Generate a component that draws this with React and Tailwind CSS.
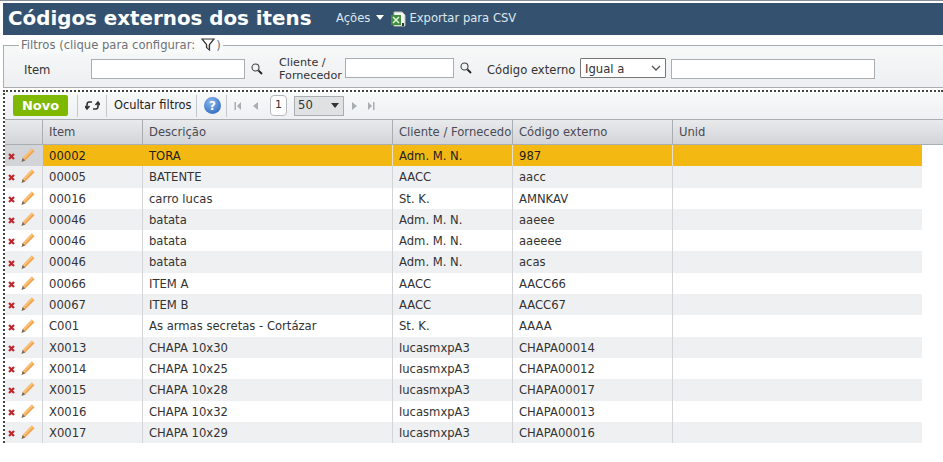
const rows = [
  ['00002', 'TORA', 'Adm. M. N.', '987'],
  ['00005', 'BATENTE', 'AACC', 'aacc'],
  ['00016', 'carro lucas', 'St. K.', 'AMNKAV'],
  ['00046', 'batata', 'Adm. M. N.', 'aaeee'],
  ['00046', 'batata', 'Adm. M. N.', 'aaeeee'],
  ['00046', 'batata', 'Adm. M. N.', 'acas'],
  ['00066', 'ITEM A', 'AACC', 'AACC66'],
  ['00067', 'ITEM B', 'AACC', 'AACC67'],
  ['C001', 'As armas secretas - Cortázar', 'St. K.', 'AAAA'],
  ['X0013', 'CHAPA 10x30', 'lucasmxpA3', 'CHAPA00014'],
  ['X0014', 'CHAPA 10x25', 'lucasmxpA3', 'CHAPA00012'],
  ['X0015', 'CHAPA 10x28', 'lucasmxpA3', 'CHAPA00017'],
  ['X0016', 'CHAPA 10x32', 'lucasmxpA3', 'CHAPA00013'],
  ['X0017', 'CHAPA 10x29', 'lucasmxpA3', 'CHAPA00016'],
];

function Pencil() {
  return (
    <svg width="14" height="15" viewBox="0 0 14 15">
      <path d="M10.8 0.5 L13.5 3.2 L4.3 12.6 L1.6 9.9 Z" fill="#f2a550" />
      <path d="M10.8 0.5 L12.2 1.9 L3 11.3 L1.6 9.9 Z" fill="#f8c07a" />
      <path d="M1.6 9.9 L4.3 12.6 L0.5 14 Z" fill="#7a6a58" />
    </svg>
  );
}

function Cross() {
  return (
    <svg width="7" height="7" viewBox="0 0 7 7" className="mt-[2px]">
      <path d="M1 1 L6 6 M6 1 L1 6" stroke="#c0272d" strokeWidth="2.2" />
    </svg>
  );
}

function Magnifier() {
  return (
    <svg width="12" height="12" viewBox="0 0 12 12" fill="none">
      <circle cx="4.5" cy="4.5" r="3.5" stroke="#444" strokeWidth="1.1" />
      <path d="M7.5 7.5 L11 11" stroke="#222" strokeWidth="1.8" />
    </svg>
  );
}

function Funnel() {
  return (
    <svg width="14" height="13" viewBox="0 0 14 13" fill="none">
      <path d="M1 1 H13 L8.5 6.5 V12 L5.5 9.5 V6.5 Z" stroke="#333" strokeWidth="1.2" fill="#fff" />
      <path d="M6.5 7 V10 L7.8 11 V7 Z" fill="#a9aeb3" />
    </svg>
  );
}

function ExcelIcon() {
  return (
    <svg width="16" height="17" viewBox="0 0 16 17">
      <path d="M4 1 H12 L15 4 V15 H4 Z" fill="#f4f6f2" stroke="#b8c0b4" />
      <rect x="1" y="4" width="10" height="10" fill="#3f8f3f" />
      <path d="M3 6 L9 12 M9 6 L3 12" stroke="#e8f4e0" strokeWidth="1.5" />
      <rect x="12" y="12" width="2" height="3" fill="#333" />
    </svg>
  );
}

function PagerArrow({ dir, end }) {
  return (
    <svg width="8" height="10" viewBox="0 0 8 10" fill="#a9aeb3">
      {dir === 'left' ? <path d={end ? 'M7 1 V9 L3 5 Z' : 'M6 1 V9 L1 5 Z'} /> : <path d={end ? 'M1 1 V9 L5 5 Z' : 'M2 1 V9 L7 5 Z'} />}
      {end && <rect x={dir === 'left' ? 0.5 : 6} y="1" width="1.5" height="8" />}
    </svg>
  );
}

export default function App() {
  return (
    <div className="w-[943px] h-[462px] overflow-hidden bg-white text-[11.6px] text-[#333] font-['DejaVu_Sans',sans-serif]">
      <div className="h-[3px] border-t border-[#8a8f94]" />
      {/* Title */}
      <div className="ml-[3px] h-[32px] bg-[#34526f] flex items-center text-white">
        <h1 className="ml-[5px] w-[328px] text-[19.85px] font-bold leading-none">Códigos externos dos itens</h1>
        <span className="text-[#dfe6ec] text-[11.6px]">Ações</span>
        <span className="ml-[6px] mb-[3px] w-0 h-0 border-x-[4px] border-x-transparent border-t-[5px] border-t-white" />
        <span className="ml-[6px]"><ExcelIcon /></span>
        <span className="ml-[3px] text-[#dfe6ec] text-[11.6px]">Exportar para CSV</span>
      </div>

      {/* Filtros */}
      <div className="ml-[3px] mt-[10px] h-[43px] relative border border-[#a9aeb3] border-r-0 bg-gradient-to-b from-[#f7f8f8] to-[#eeeff1] flex items-center">
        <div className="absolute left-[15px] -top-[8px] px-[2px] bg-gradient-to-b from-white to-[#f7f8f8] flex items-center text-[#6d7278] h-[16px]">
          Filtros (clique para configurar:
          <span className="ml-[6px] mr-[1px] -mt-[4px] text-[#333]"><Funnel /></span>)
        </div>
        <span className="ml-[20px] w-[67px] pt-[8px]">Item</span>
        <div className="w-[154px] h-[20px] mt-[5px] border border-[#a9aeb3] bg-white" />
        <span className="ml-[6px] mt-[4px]"><Magnifier /></span>
        <span className="ml-[16px] w-[66px] leading-[13px] pt-[5px] text-[11.2px]">Cliente /<br />Fornecedor</span>
        <div className="w-[109px] h-[20px] mt-[3px] border border-[#a9aeb3] bg-white" />
        <span className="ml-[6px] mt-[2px]"><Magnifier /></span>
        <span className="ml-[15px] w-[93px] pt-[8px]">Código externo</span>
        <div className="w-[86px] h-[20px] mt-[3px] border border-[#767676] bg-white flex items-center justify-between pl-[4px] pr-[4px] rounded-[1px]">
          <span className="pt-[3px]">Igual a</span>
          <svg width="10" height="6" viewBox="0 0 10 6"><path d="M1 1 L5 5 L9 1" fill="none" stroke="#555" strokeWidth="1.3" /></svg>
        </div>
        <div className="ml-[5px] w-[204px] h-[20px] mt-[5px] border border-[#a9aeb3] bg-white" />
      </div>

      {/* Grid */}
      <div className="ml-[3px] mt-[2px] border-t-2 border-l-2 border-dotted border-[#444]">
        <div className="h-[28px] bg-gradient-to-b from-[#f8f9f9] to-[#eff0f2] border-b border-[#a9aeb3] flex items-center">
          <button className="ml-[8px] w-[55px] h-[21px] rounded-[2px] bg-[#7fb800] text-white font-bold text-[13px] leading-none">Novo</button>
          <span className="ml-[9px] w-px h-[22px] bg-[#c4c8cc]" />
          <svg className="ml-[7px]" width="15" height="13" viewBox="0 0 15 13" fill="none" stroke="#333" strokeWidth="1.6">
            <path d="M7 3 H4 Q2 3 2 6 V9 M0 7 L2 10 L4.5 7" />
            <path d="M8 10 H11 Q13 10 13 7 V4 M10.5 6 L13 3 L15 6" />
          </svg>
          <span className="ml-[6px] w-px h-[22px] bg-[#c4c8cc]" />
          <span className="ml-[7px] w-[77px] text-[#222] text-[11.4px] whitespace-nowrap">Ocultar filtros</span>
          <span className="ml-[5px] w-px h-[22px] bg-[#c4c8cc]" />
          <span className="ml-[7px] w-[17px] h-[17px] rounded-full bg-[radial-gradient(circle_at_40%_30%,#8ab6ee,#1f5cb8)] text-white text-[12px] font-bold flex items-center justify-center">?</span>
          <span className="ml-[5px] w-px h-[22px] bg-[#c4c8cc]" />
          <span className="ml-[7px]"><PagerArrow dir="left" end /></span>
          <span className="ml-[10px]"><PagerArrow dir="left" /></span>
          <span className="ml-[10px] w-[17px] h-[21px] rounded-[4px] border border-[#b5b9bd] bg-white flex items-center justify-center text-[11px]">1</span>
          <div className="ml-[7px] w-[50px] h-[20px] border border-[#a9aeb3] bg-[#dfe1e3] flex items-center justify-between pl-[3px] pr-[4px]">
            <span>50</span>
            <span className="w-0 h-0 border-x-[4px] border-x-transparent border-t-[5px] border-t-[#333]" />
          </div>
          <span className="ml-[6px]"><PagerArrow dir="right" /></span>
          <span className="ml-[9px]"><PagerArrow dir="right" end /></span>
        </div>

        <div className="h-[25px] bg-gradient-to-b from-[#e9eaec] to-[#d2d4d8] border-b border-[#a9aeb3] flex items-center text-[#4a4a55]">
          <div className="w-[38px] h-full border-r border-[#a9aeb3]" />
          <div className="w-[100px] h-full border-r border-[#a9aeb3] pl-[6px] pt-[1px] flex items-center">Item</div>
          <div className="w-[250px] h-full border-r border-[#a9aeb3] pl-[6px] pt-[1px] flex items-center">Descrição</div>
          <div className="w-[120px] h-full border-r border-[#a9aeb3] pl-[6px] pt-[1px] flex items-center overflow-hidden whitespace-nowrap">Cliente / Fornecedor</div>
          <div className="w-[160px] h-full border-r border-[#a9aeb3] pl-[6px] pt-[1px] flex items-center">Código externo</div>
          <div className="pl-[6px] pt-[1px]">Unid</div>
        </div>

        <div className="w-[917px]">
          {rows.map((row, i) => {
            const selected = i === 0;
            const bg = selected ? 'bg-[#f4b813]' : i % 2 === 1 ? 'bg-[#eff0f2]' : 'bg-white';
            return (
              <div key={i} className={`h-[21.3px] flex items-center ${bg} ${selected ? 'text-[#222]' : ''}`}>
                <div className={`w-[38px] h-full flex items-center gap-[6px] pl-[3px] border-r border-[#d2d4d8] ${selected ? 'bg-[#d2d4d8]' : ''}`}>
                  <Cross />
                  <Pencil />
                </div>
                <div className={`w-[100px] h-full flex items-center pl-[6px] pt-[2px] border-r ${selected ? 'border-[#f4b813]' : 'border-[#d2d4d8]'}`}>{row[0]}</div>
                <div className={`w-[250px] h-full flex items-center pl-[6px] pt-[2px] border-r ${selected ? 'border-[#e8e0c8]' : 'border-[#d2d4d8]'}`}>{row[1]}</div>
                <div className={`w-[120px] h-full flex items-center pl-[6px] pt-[2px] border-r ${selected ? 'border-[#e8e0c8]' : 'border-[#d2d4d8]'}`}>{row[2]}</div>
                <div className={`w-[160px] h-full flex items-center pl-[6px] pt-[2px] border-r ${selected ? 'border-[#e8e0c8]' : 'border-[#d2d4d8]'}`}>{row[3]}</div>
                <div className="flex-1" />
              </div>
            );
          })}
        </div>
      </div>
    </div>
  );
}
